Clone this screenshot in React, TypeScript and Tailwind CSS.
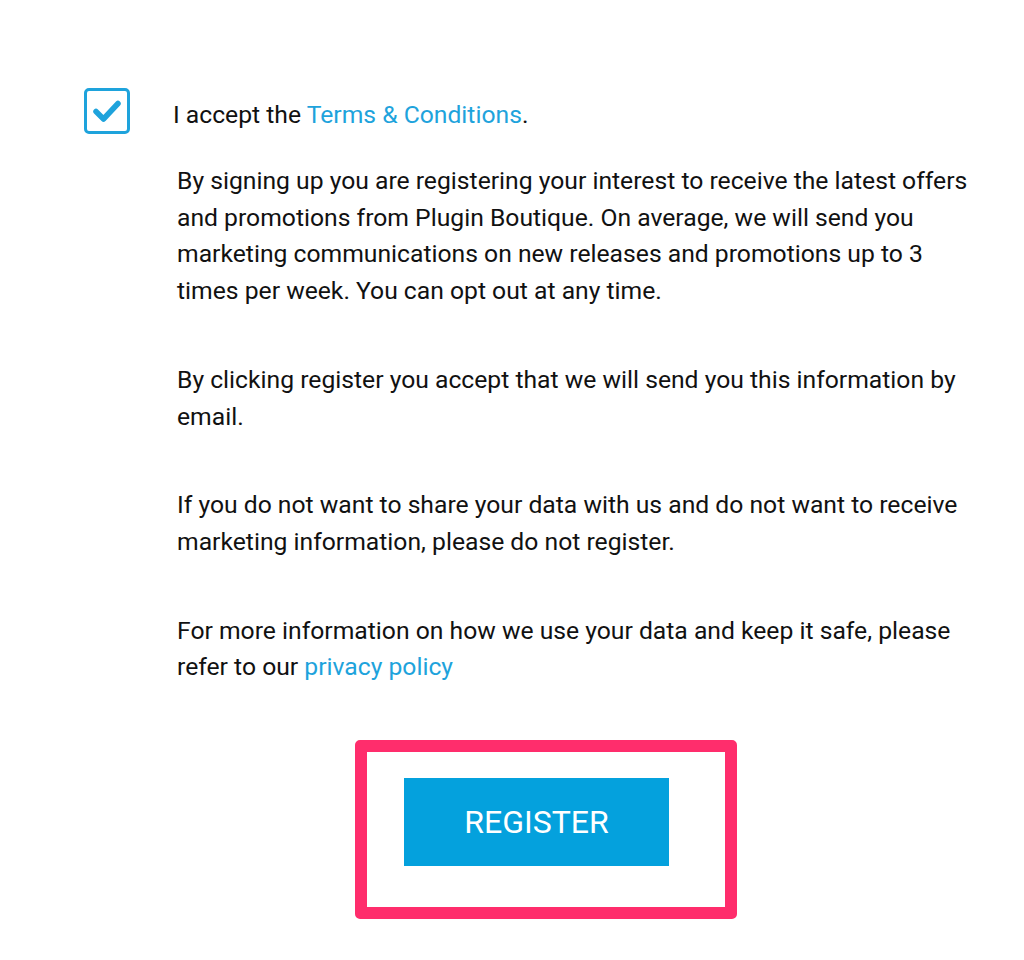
import React from 'react';

const App: React.FC = () => {
  const link = 'text-[#1ea3dc]';

  return (
    <div className="min-h-[960px] w-[1024px] bg-white font-['Roboto',sans-serif] text-[#111111]">
      <div className="pl-[84px] pt-[88px]">
        {/* Checkbox row */}
        <div className="flex items-start">
          <div className="flex h-[46px] w-[46px] shrink-0 items-center justify-center rounded-[5px] border-[3px] border-[#1ea3dc]">
            <svg width="32" height="28" viewBox="0 0 32 28" fill="none">
              <path d="M5 14.5 L12.5 22 L27 6.5" stroke="#1ea3dc" strokeWidth="5.5" strokeLinecap="round" strokeLinejoin="round" />
            </svg>
          </div>
          <p className="ml-[43px] mt-[8px] text-[24.7px] leading-[37px]">
            I accept the <a className={link}>Terms &amp; Conditions</a>.
          </p>
        </div>

        {/* Copy */}
        <div className="mt-[29px] w-[895px] pl-[93px] text-[24.7px] leading-[36.7px]">
          <p>
            By signing up you are registering your interest to receive the latest offers and promotions from Plugin
            Boutique. On average, we will send you marketing communications on new releases and promotions up to 3
            times per week. You can opt out at any time.
          </p>
          <p className="mt-[52px]">
            By clicking register you accept that we will send you this information by email.
          </p>
          <p className="mt-[52px]">
            If you do not want to share your data with us and do not want to receive marketing information, please do
            not register.
          </p>
          <p className="mt-[52px]">
            For more information on how we use your data and keep it safe, please refer to our{' '}
            <a className={link}>privacy policy</a>
          </p>
        </div>

        {/* Register */}
        <div className="ml-[271px] mt-[54px] w-[382px] rounded-[5px] border-[12px] border-[#ff2d6c] pb-[41px] pl-[37px] pt-[26px]">
          <button className="flex h-[88px] w-[265px] items-center justify-center bg-[#04a1dd] text-[32px] text-white">
            REGISTER
          </button>
        </div>
      </div>
    </div>
  );
};

export default App;
